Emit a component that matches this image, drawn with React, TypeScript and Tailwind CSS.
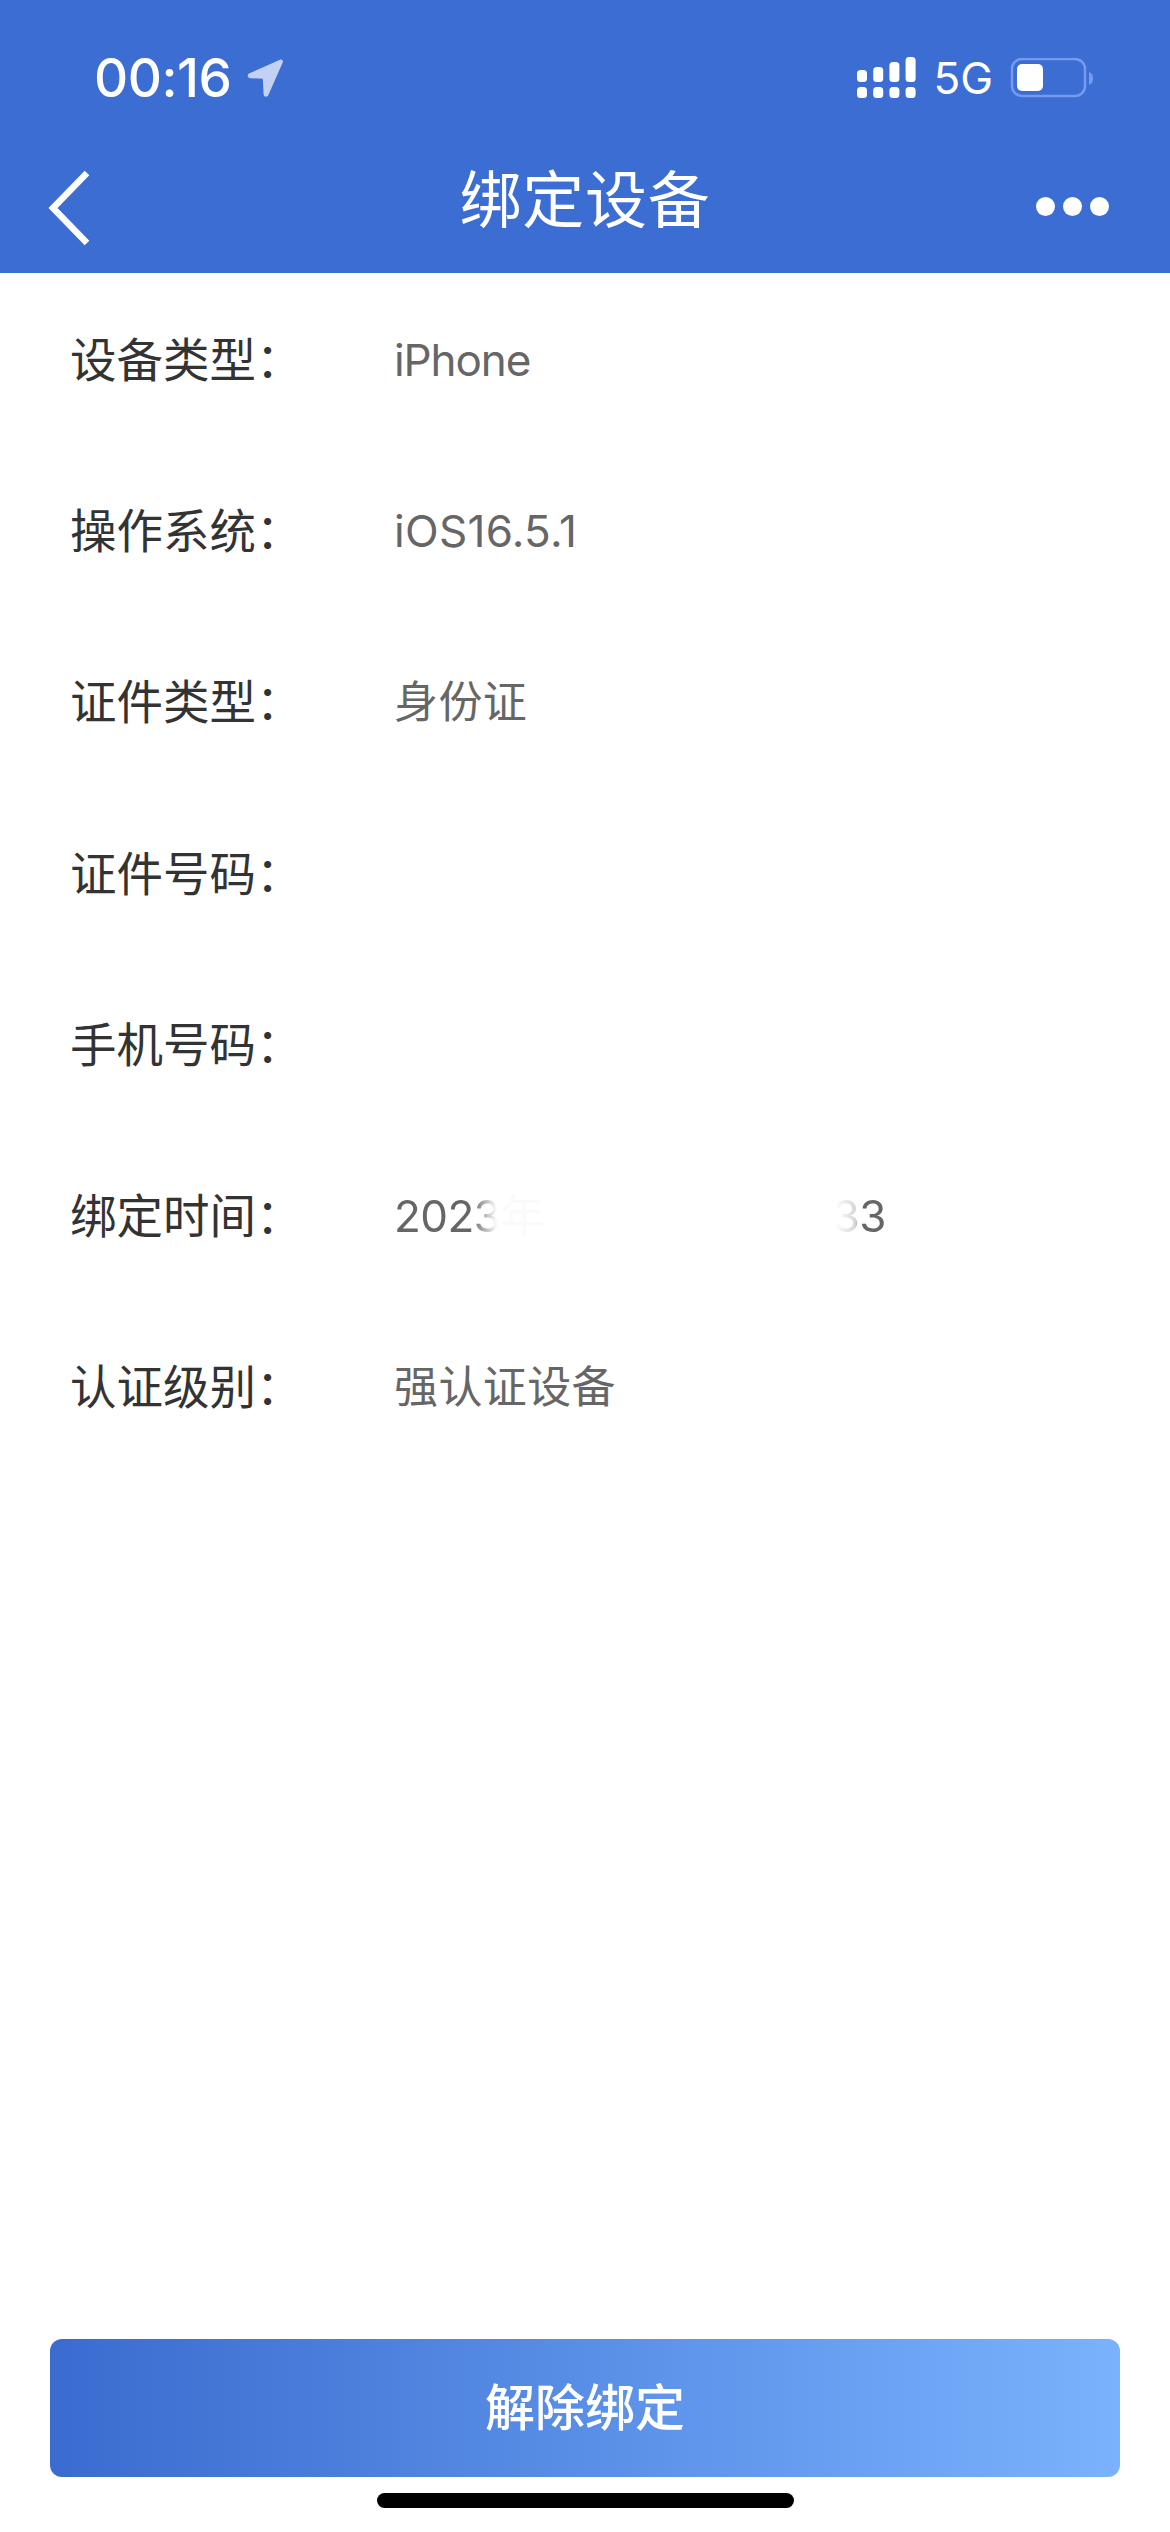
const cjk = "font-['Inter','Noto_Sans_CJK_SC',sans-serif]";

const rows: [string, string, string][] = [
  ['设备类型', 'iPhone', 'tracking-[-1.1px]'],
  ['操作系统', 'iOS16.5.1', 'tracking-[0.3px]'],
  ['证件类型', '身份证', 'tracking-[0.4px]'],
  ['证件号码', '', ''],
  ['手机号码', '', ''],
  ['绑定时间', '', ''],
  ['认证级别', '强认证设备', 'tracking-[0.4px]'],
];

function Signal() {
  const tops = [70, 67, 62, 57];
  return (
    <svg width="60" height="42" viewBox="855 57 60 42" fill="#fff">
      {tops.map((t, i) => (
        <g key={t}>
          <rect x={855 + i * 16.2} y={t} width="10" height={82 - t} rx="3.5" />
          <rect x={855 + i * 16.2} y="87" width="10" height="11" rx="3.5" />
        </g>
      ))}
    </svg>
  );
}

function Battery() {
  return (
    <svg width="84" height="40" viewBox="1008 58 84 40">
      <rect x="1010" y="59" width="73" height="37" rx="10" fill="none" stroke="#759af0" strokeWidth="2.5" />
      <rect x="1015" y="64" width="26" height="27" rx="5" fill="#fff" />
      <path d="M1087 72c3 1 4 3 4 6.500s-1 5.500-4 6.500z" fill="#759af0" />
    </svg>
  );
}

export default function App() {
  return (
    <div className={`flex h-[2532px] w-[1170px] flex-col bg-white ${cjk}`}>
      <header className="h-[273px] bg-[#3c6dd2] text-white">
        <div className="flex h-[155px] items-start justify-between pl-[94px] pr-[76px] pt-[57px]">
          <div className="flex items-center gap-[16px]">
            <span className="text-[53px] font-medium leading-[42px] tracking-[-0.5px]">00:16</span>
            <svg width="36" height="38" viewBox="0 0 36 38" fill="#c3d1f2">
              <path d="M33 .7 2.500 14.300c-2.800 1.300-2.300 4.700.8 4.900l12.500.5.800 15.500c.2 3 3.700 3.400 4.800.8L35.700 3.500C36.500 1.500 35 0 33 .7z" />
            </svg>
          </div>
          <div className="flex items-center">
            <Signal />
            <span className="ml-[16px] text-[44px] leading-[42px]">5G</span>
            <span className="ml-[17px] flex"><Battery /></span>
          </div>
        </div>
        <nav className="grid h-[118px] grid-cols-[1fr_auto_1fr] items-start px-[45px]">
          <svg className="mt-[13px]" width="48" height="80" viewBox="0 0 48 80" fill="none" stroke="#fff" strokeWidth="6.500">
            <path d="M42 5 8 40l34 35" />
          </svg>
          <h1 className="mt-[10px] text-[62px] font-normal leading-[72px] tracking-[0.8px]">绑定设备</h1>
          <div className="mt-[42px] mr-[16px] flex justify-end gap-[8px]">
            <span className="size-[19px] rounded-full bg-white" />
            <span className="size-[19px] rounded-full bg-white" />
            <span className="size-[19px] rounded-full bg-white" />
          </div>
        </nav>
      </header>

      <main className="flex-1 pt-[1px]">
        {rows.map(([label, value, track]) => (
          <div key={label} className="flex h-[171.300px] items-center pl-[70px]">
            <span className="w-[324px] text-[46.500px] leading-[56px] text-[#333333]">{label}：</span>
            {value && (
              <span className={`text-[44px] leading-[56px] text-[#666666] ${track}`}>{value}</span>
            )}
            {label === '绑定时间' && (
              <>
                <span className="text-[44px] leading-[56px] tracking-[-0.6px] text-[#666666] [mask-image:linear-gradient(to_right,#000_78px,rgba(0,0,0,0.03)_102px)]">2023年</span>
                <span className="ml-[289px] text-[44px] leading-[56px] tracking-[-0.6px] text-[#666666] [mask-image:linear-gradient(to_right,rgba(0,0,0,0)_2px,rgba(0,0,0,0.25)_22px,#000_28px)]">33</span>
              </>
            )}
          </div>
        ))}
      </main>

      <button className="mx-[50px] flex h-[138px] items-center justify-center rounded-[12px] bg-gradient-to-r from-[#3b6bcf] to-[#7ab2fd] text-[50px] font-medium text-white">
        解除绑定
      </button>
      <div className="flex h-[55px] justify-center pt-[16px]">
        <div className="h-[15px] w-[417px] rounded-full bg-black" />
      </div>
    </div>
  );
}
